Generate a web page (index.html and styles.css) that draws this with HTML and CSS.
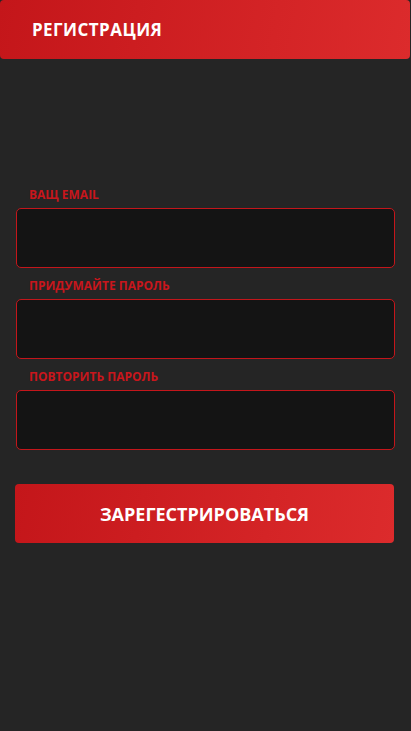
FILE: index.html
```html
<!DOCTYPE html>
<html lang="ru">
<head>
<meta charset="utf-8">
<title>Регистрация</title>
<link rel="stylesheet" href="styles.css">
</head>
<body>
<header class="topbar">
  <h1 class="topbar-title">РЕГИСТРАЦИЯ</h1>
</header>
<form class="form">
  <div class="field">
    <label class="field-label">ВАЩ EMAIL</label>
    <div class="field-input"></div>
  </div>
  <div class="field">
    <label class="field-label">ПРИДУМАЙТЕ ПАРОЛЬ</label>
    <div class="field-input"></div>
  </div>
  <div class="field">
    <label class="field-label">ПОВТОРИТЬ ПАРОЛЬ</label>
    <div class="field-input"></div>
  </div>
  <div class="submit">ЗАРЕГЕСТРИРОВАТЬСЯ</div>
</form>
</body>
</html>
```
FILE: styles.css
```css
* { box-sizing: border-box; }
html, body {
  margin: 0;
  padding: 0;
  background: #252525;
  height: 100%;
}
body {
  font-family: "Open Sans", "Noto Sans", sans-serif;
}
.topbar {
  height: 59px;
  margin: 0 1px 0 0;
  border-radius: 4px;
  background: linear-gradient(100deg, #c4161a 0%, #dc2b2c 100%);
  display: flex;
  align-items: center;
  padding-left: 32px;
}
.topbar-title {
  margin: 0;
  color: #fff;
  font-size: 17px;
  font-weight: 700;
  line-height: 20px;
  letter-spacing: 0.45px;
}
.form {
  display: flex;
  flex-direction: column;
  padding: 128px 16px 0 16px;
}
.field {
  display: flex;
  flex-direction: column;
  margin-bottom: 10px;
}
.field-label {
  color: #c8161c;
  font-size: 12px;
  font-weight: 700;
  line-height: 16px;
  padding-left: 13px;
  margin-bottom: 5px;
}
.field-input {
  height: 60px;
  border: 1px solid #c4161b;
  border-radius: 5px;
  background: #141414;
}
.submit {
  margin: 24px 1px 0 -1px;
  height: 59px;
  border-radius: 4px;
  background: linear-gradient(100deg, #c4161a 0%, #dc2b2c 100%);
  color: #fff;
  font-size: 18px;
  font-weight: 700;
  display: flex;
  align-items: center;
  justify-content: center;
  letter-spacing: 0;
}
```
